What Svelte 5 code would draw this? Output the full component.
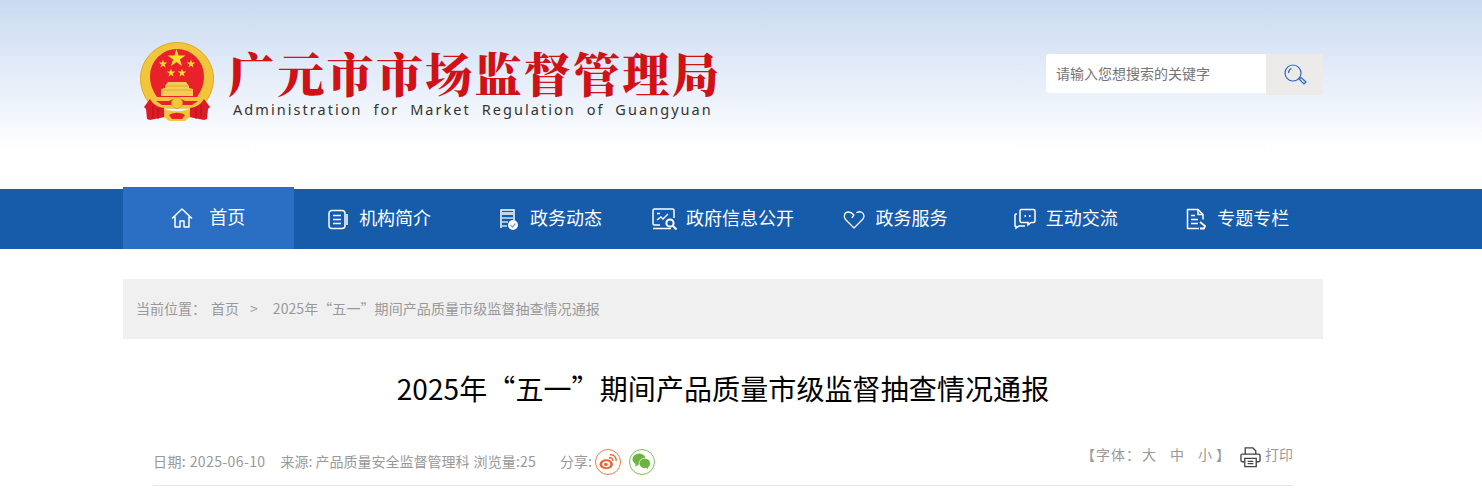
<script>
  const navItems = [
    { label: '首页', icon: 'home', active: true, pad: 3 },
    { label: '机构简介', icon: 'doc', pad: 4 },
    { label: '政务动态', icon: 'news', pad: 5 },
    { label: '政府信息公开', icon: 'info', pad: 0 },
    { label: '政务服务', icon: 'heart', pad: 0 },
    { label: '互动交流', icon: 'chat', pad: 2 },
    { label: '专题专栏', icon: 'topic', pad: 2 }
  ];

  // five pointed star for the emblem
  function star(cx, cy, r) {
    const pts = [];
    for (let i = 0; i < 10; i++) {
      const rad = i % 2 ? r * 0.38 : r;
      const a = (Math.PI / 5) * i - Math.PI / 2;
      pts.push((cx + rad * Math.cos(a)).toFixed(1) + ',' + (cy + rad * Math.sin(a)).toFixed(1));
    }
    return pts.join(' ');
  }

  const stars = [
    [36.500, 16.500, 9.500],
    [23, 22, 4.500],
    [51, 22, 4.500],
    [31, 31, 4.500],
    [42, 31, 4.500]
  ];
</script>

{#snippet navIcon(name)}
  <svg class="nav-icon" width="26" height="24" viewBox="0 0 26 24" fill="none" stroke="#fff" stroke-width="1.500">
    {#if name === 'home'}
      <path d="M3 12.500 13 3l10 9.500M6 10.500V21h5v-6h4v6h5V10.500" stroke-linejoin="round" />
    {:else if name === 'doc'}
      <rect x="4" y="3.500" width="16" height="18" rx="3" />
      <path d="M8 8.500h8M8 12.500h8M8 16.500h8M22 7v11" />
    {:else if name === 'news'}
      <path d="M5 21V3h13v10" />
      <path d="M6 5h11v3H6z" fill="#fff" stroke="none" opacity=".75" />
      <path d="M6 10h11v2H6zM6 14h6v2H6zM6 18h5v2H6z" fill="#fff" stroke="none" opacity=".6" />
      <circle cx="17" cy="18" r="5" fill="#fff" stroke="none" />
      <path d="m14.500 18 2 2 3-3.500" stroke="#7fa3d6" stroke-width="1.200" />
    {:else if name === 'info'}
      <path d="M8 18H2.500A1.500 1.500 0 0 1 1 16.500v-13A1.500 1.500 0 0 1 2.500 2h18A1.500 1.500 0 0 1 22 3.500V11" />
      <path d="M1 21.500h18" />
      <path d="M5 6.500h3M5 13l4-3 2 2 5-5" stroke-width="1.400" />
      <circle cx="18" cy="16" r="3.600" stroke-width="2" />
      <path d="m21 19 3.500 3.500" stroke-width="2" />
    {:else if name === 'heart'}
      <path d="M13 21 4.500 12.500C2 9.500 3.500 5 7.500 5c2.500 0 4 1.500 5.500 3-1 1-1.500 2-2 3M15.500 5.800c3.500-2.300 7.500-.3 7.500 3.200 0 1.500-.5 2.500-1.500 3.500L13 21" stroke-linejoin="round" stroke-width="1.300" />
    {:else if name === 'chat'}
      <path d="M8 5V4a1.500 1.500 0 0 1 1.500-1.500h12A1.500 1.500 0 0 1 23 4v10a1.500 1.500 0 0 1-1.500 1.500H19l-3 2.500v-2.500H9.500A1.500 1.500 0 0 1 8 14V5Z" />
      <path d="M5 7H4a1 1 0 0 0-1 1v11l1 .5V21l3-2h6" />
      <path d="M12.500 9h1.500M17 9h1.500" stroke-width="2" />
    {:else}
      <path d="M16 21.500H4.500V2.500H15l5 5v5" stroke-linejoin="round" />
      <path d="M15 2.500v5h5M8 8.500h4M8 12.500h7M8 16.500h7" />
      <path d="m17 15 5 4-1 2.500h-4" stroke-width="1.800" />
    {/if}
  </svg>
{/snippet}

<div class="page">
  <header class="top">
    <div class="wrap top-in">
      <div class="brand">
        <svg class="emblem" width="74" height="80" viewBox="0 0 74 80">
          <path d="M37 .5C17 .5.500 17 .5 36.500c0 12 5.500 22 13 29.500h47c7.500-7.500 13-17.500 13-29.500C73.500 17 57 .5 37 .5Z" fill="#f3c53a" stroke="#dfa825" />
          <path d="M10 34a27 27 0 0 1 54 0c0 9-3 15-7 21H17c-4-6-7-12-7-21Z" fill="#e9212b" />
          {#each stars as s}
            <polygon points={star(s[0], s[1], s[2])} fill="#fbdf2f" />
          {/each}
          <path d="M28 40h18l3 4v2l4 1v7H21v-7l4-1v-2Z" fill="#f5cd55" />
          <path d="M25 44h24M21 48h32" stroke="#df9f1e" stroke-width=".8" />
          <path d="M9 55c6 3 12 3 18 3h20c6 0 12 0 18-3l-3 7-12 4H24l-12-4Z" fill="#f3c53a" />
          <path d="M16 59h13l4-2h8l4 2h13l-6 4H22Z" fill="#e9212b" />
          <circle cx="37" cy="61" r="5.500" fill="#f3c53a" stroke="#d9991c" stroke-width=".8" />
          <path d="M10 57c3 5 7 8 14 9l1 9-15 3-3-1-1-10-2-2Z" fill="#db1c26" />
          <path d="M64 57c-3 5-7 8-14 9l-1 9 15 3 3-1 1-10 2-2Z" fill="#db1c26" />
          <path d="M13 63v13M18 66v11M61 63v13M56 66v11" stroke="#a9121a" stroke-width=".8" />
          <path d="M25 67c8 3 16 3 24 0l1 8-5 4H29l-5-4Z" fill="#f3c53a" />
          <path d="M29 73c5-3 11-3 16 0l-3 4H32Z" fill="#e9212b" />
        </svg>
        <div class="brand-text">
          <h1>广元市市场监督管理局</h1>
          <p>Administration for Market Regulation of Guangyuan</p>
        </div>
      </div>
      <div class="search">
        <span class="search-input">请输入您想搜索的关键字</span>
        <span class="search-btn">
          <svg width="24" height="24" viewBox="0 0 24 24" fill="none" stroke="#2f66c0" stroke-width="1.200">
            <circle cx="10" cy="10" r="8" />
            <path d="M5.500 10A5 5 0 0 1 8.500 5.500" />
            <path d="m16 16 2-1.500 5 4.500-2 2Z" />
          </svg>
        </span>
      </div>
    </div>
  </header>

  <nav class="nav">
    <div class="wrap nav-in">
      {#each navItems as item}
        <a class="nav-item" class:active={item.active} href="#top" style="padding-right: {item.pad}px">
          {@render navIcon(item.icon)}
          <span>{item.label}</span>
        </a>
      {/each}
    </div>
  </nav>

  <div class="wrap">
    <div class="crumb">
      <span>当前位置：</span><span class="c1">首页</span><span class="c2">&gt;</span><span class="c3">2025年“五一”期间产品质量市级监督抽查情况通报</span>
    </div>
    <h2 class="title">2025年“五一”期间产品质量市级监督抽查情况通报</h2>
    <div class="meta">
      <div class="meta-left">
        <span class="txt date">日期: 2025-06-10</span>
        <span class="txt source">来源: 产品质量安全监督管理科</span>
        <span class="txt views">浏览量:25</span>
        <span class="txt share">分享:</span>
        <span class="round weibo">
          <svg width="18" height="16" viewBox="0 0 20 18">
            <ellipse cx="8" cy="11.500" rx="7.500" ry="5.500" fill="#f0622d" />
            <ellipse cx="8" cy="11.500" rx="4.500" ry="3.300" fill="#fff" />
            <circle cx="7.500" cy="11.800" r="2" fill="#f0622d" />
            <path d="M11 4.500c3-1 5 1 4.500 3.500" fill="none" stroke="#f0622d" stroke-width="1.500" />
            <path d="M12 1c4-1 8 2.500 7 7" fill="none" stroke="#f0622d" stroke-width="1.500" />
          </svg>
        </span>
        <span class="round wechat">
          <svg width="19" height="17" viewBox="0 0 20 18">
            <ellipse cx="7.500" cy="6.500" rx="7" ry="6" fill="#6cb33f" />
            <ellipse cx="13.500" cy="11" rx="6" ry="5.500" fill="#6cb33f" stroke="#fff" stroke-width=".8" />
            <path d="m4 11-1 3.500 4-2ZM15 15l2 2.500v-4Z" fill="#6cb33f" />
          </svg>
        </span>
      </div>
      <div class="meta-right">
        <span class="up lead">【字体：</span>
        <span class="up f1">大</span>
        <span class="up f2">中</span>
        <span class="up f2">小</span>
        <span class="up f3">】</span>
        <svg class="printer" width="21" height="22" viewBox="0 0 22 22" fill="none" stroke="#444" stroke-width="1.400">
          <path d="M5.500 8V1.500h8l3 3V8" />
          <path d="M5 16H2.500A1.500 1.500 0 0 1 1 14.500V9.500A1.500 1.500 0 0 1 2.500 8h17A1.500 1.500 0 0 1 21 9.500v5a1.500 1.500 0 0 1-1.500 1.500H17" />
          <path d="M5 12.500h12V21H5Z" />
          <path d="M8 15.500h6M8 18h6" />
        </svg>
        <span class="up print">打印</span>
      </div>
    </div>
  </div>
</div>

<style>
  :global(html), :global(body) {
    margin: 0;
    height: 496px;
    overflow: hidden;
    background: #fff;
  }
  .page {
    font-family: "Noto Sans CJK SC", "Noto Sans", sans-serif;
    color: #999;
  }
  .wrap {
    width: 1200px;
    margin-left: 123px;
  }
  .top {
    height: 189px;
    background: linear-gradient(#c9daf0, #e8effa 45%, #fff 80%);
  }
  .top-in {
    display: flex;
    justify-content: space-between;
    padding-top: 42px;
  }
  .brand {
    display: flex;
    align-items: flex-start;
    margin-left: 17px;
  }
  .emblem {
    margin-right: 14px;
  }
  h1 {
    margin: 0;
    color: #d01116;
    font-family: "Noto Serif CJK SC", "Noto Sans CJK SC", serif;
    font-weight: 900;
    font-size: 47px;
    line-height: 54px;
    letter-spacing: 2.300px;
    white-space: nowrap;
  }
  .brand-text {
    margin-top: 3px;
  }
  .brand-text p {
    margin: 0 0 0 5px;
    color: #333;
    font-family: "Noto Sans", sans-serif;
    font-size: 14.500px;
    line-height: 20px;
    letter-spacing: 2.050px;
    word-spacing: 5px;
    white-space: nowrap;
  }
  .search {
    display: flex;
    margin-top: 12px;
    width: 277px;
    height: 41px;
  }
  .search-input {
    flex: 1;
    height: 39px;
    line-height: 39px;
    padding-left: 10px;
    background: #fff;
    border-radius: 3px 0 0 3px;
    color: #757575;
    font-size: 14px;
  }
  .search-btn {
    width: 57px;
    display: flex;
    align-items: center;
    justify-content: center;
    background: #ecebea;
    border-radius: 0 3px 3px 0;
  }
  .nav {
    height: 60px;
    background: #175bab;
  }
  .nav-in {
    display: flex;
  }
  .nav-item {
    flex: none;
    width: calc(100% / 7);
    box-sizing: border-box;
    height: 60px;
    display: flex;
    align-items: center;
    justify-content: center;
    gap: 8px;
    color: #fff;
    font-size: 18px;
    text-decoration: none;
  }
  .nav-item span {
    margin-top: -4px;
  }
  .nav-item.active {
    height: 62px;
    margin-top: -2px;
    background: #2a6fc4;
    gap: 14px;
  }
  .crumb {
    margin-top: 30px;
    height: 60px;
    line-height: 58px;
    padding-left: 13px;
    background: #f0f0f0;
    font-size: 14px;
    color: #999;
  }
  .c1 { margin-left: 5px; }
  .c2 { margin: 0 15px 0 11px; }
  .c3 { letter-spacing: .08px; }
  .title {
    margin: 0;
    height: 102px;
    padding-top: 28px;
    box-sizing: border-box;
    line-height: 42px;
    text-align: center;
    color: #000;
    font-size: 28px;
    font-weight: 400;
    letter-spacing: .1px;
  }
  .meta {
    margin: 0 30px;
    height: 44px;
    display: flex;
    justify-content: space-between;
    align-items: center;
    border-bottom: 1px solid #e6e6e6;
    font-size: 14px;
    color: #999;
  }
  .meta-left, .meta-right {
    display: flex;
    align-items: center;
    line-height: 20px;
  }
  .meta-left {
    margin-top: -3px;
  }
  .txt { margin-bottom: 2px; }
  .date { letter-spacing: .4px; }
  .source { margin-left: 15px; }
  .views { margin-left: 4px; letter-spacing: .15px; }
  .share { margin-left: 24px; }
  .round {
    width: 24px;
    height: 24px;
    margin-left: 3px;
    border-radius: 50%;
    display: flex;
    align-items: center;
    justify-content: center;
    border: 1px solid #f4774a;
  }
  .wechat {
    margin-left: 8px;
    border-color: #7cc04f;
  }
  .meta-right {
    margin-top: -14px;
  }
  .up { margin-bottom: 4px; }
  .lead { letter-spacing: 1px; }
  .f1 { margin-left: 1px; }
  .f2 { margin-left: 14px; }
  .f3 { margin-left: 4px; }
  .printer { margin: 2px 4px 0 10px; }
</style>
